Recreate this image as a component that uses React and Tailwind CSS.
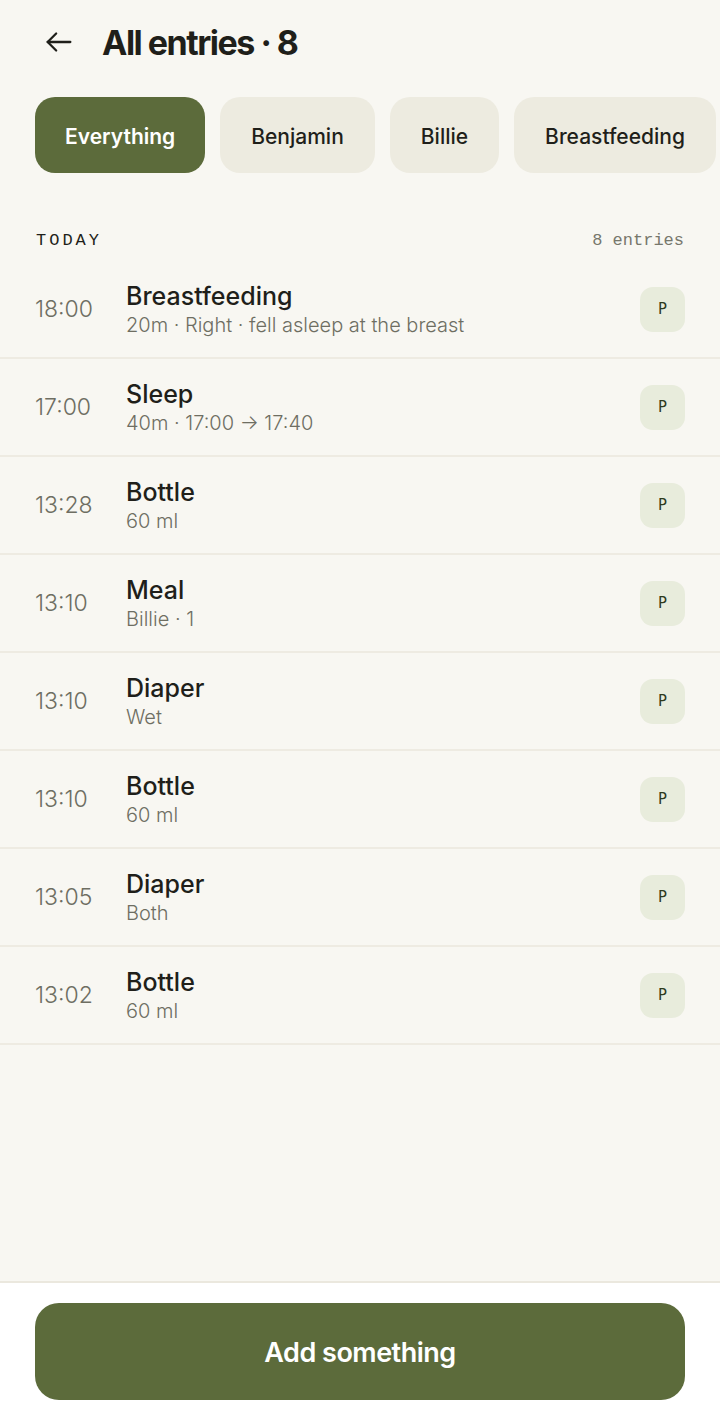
import React from 'react';

const entries = [
  { time: '18:00', title: 'Breastfeeding', sub: '20m · Right · fell asleep at the breast' },
  { time: '17:00', title: 'Sleep', sub: '40m · 17:00 → 17:40' },
  { time: '13:28', title: 'Bottle', sub: '60 ml' },
  { time: '13:10', title: 'Meal', sub: 'Billie · 1' },
  { time: '13:10', title: 'Diaper', sub: 'Wet' },
  { time: '13:10', title: 'Bottle', sub: '60 ml' },
  { time: '13:05', title: 'Diaper', sub: 'Both' },
  { time: '13:02', title: 'Bottle', sub: '60 ml' },
];

const filters = ['Everything', 'Benjamin', 'Billie', 'Breastfeeding'];

export default function App() {
  return (
    <div className="h-[1417px] w-[720px] flex flex-col bg-[#f8f7f2] text-[#1f1f1a] font-['Inter',sans-serif] overflow-hidden">
      <div className="flex-1">
        <header className="flex items-center gap-[26px] pl-[42px] h-[84px]">
          <svg width="34" height="34" viewBox="0 0 24 24" fill="none" stroke="#1f1f1a" strokeWidth="1.6" strokeLinecap="round" strokeLinejoin="round">
            <path d="M20 12H4" />
            <path d="M10 6l-6 6 6 6" />
          </svg>
          <h1 className="text-[34px] font-bold tracking-[-1.5px]">All entries · 8</h1>
        </header>

        <div className="flex gap-[15px] pl-[35px] pt-[13px] overflow-hidden">
          {filters.map((f, i) => (
            <button
              key={f}
              type="button"
              className={
                i === 0
                  ? 'shrink-0 h-[76px] px-[30px] pt-[3px] rounded-[20px] bg-[#5c6b3b] text-white text-[21px] font-semibold'
                  : 'shrink-0 h-[76px] px-[31px] pt-[3px] rounded-[20px] bg-[#edebe0] text-[#1f1f1a] text-[21px] font-medium'
              }
            >
              {f}
            </button>
          ))}
        </div>

        <div className="flex items-center justify-between px-[36px] pt-[56px] pb-[8px] font-['Liberation_Mono',monospace] text-[17px] leading-[24px]">
          <span className="tracking-[3px] text-[#1f1f1a]">TODAY</span>
          <span className="text-[#77776c]">8 entries</span>
        </div>

        <ul>
          {entries.map((e, i) => (
            <li key={i} className="h-[98px] flex items-center border-b-2 border-[#eeebe2] pl-[35px] pr-[35px]">
              <span className="w-[91px] text-[23px] font-light text-[#6e6e62]">{e.time}</span>
              <div className="flex-1 flex flex-col">
                <span className="text-[25px] font-medium leading-[31px]">{e.title}</span>
                <span className="text-[20px] font-light text-[#6e6e62] leading-[26px]">{e.sub}</span>
              </div>
              <span className="w-[45px] h-[45px] rounded-[13px] bg-[#e8ecdc] flex items-center justify-center text-[15px] text-[#2f3a1c] font-['DejaVu_Sans_Mono',monospace]">
                P
              </span>
            </li>
          ))}
        </ul>
      </div>

      <footer className="bg-white border-t-2 border-[#ebe8de] px-[35px] pt-[20px] pb-[17px]">
        <button
          type="button"
          className="w-full h-[97px] pt-[3px] rounded-[24px] bg-[#5c6b3b] text-white text-[27px] font-semibold tracking-[-0.5px]"
        >
          Add something
        </button>
      </footer>
    </div>
  );
}
